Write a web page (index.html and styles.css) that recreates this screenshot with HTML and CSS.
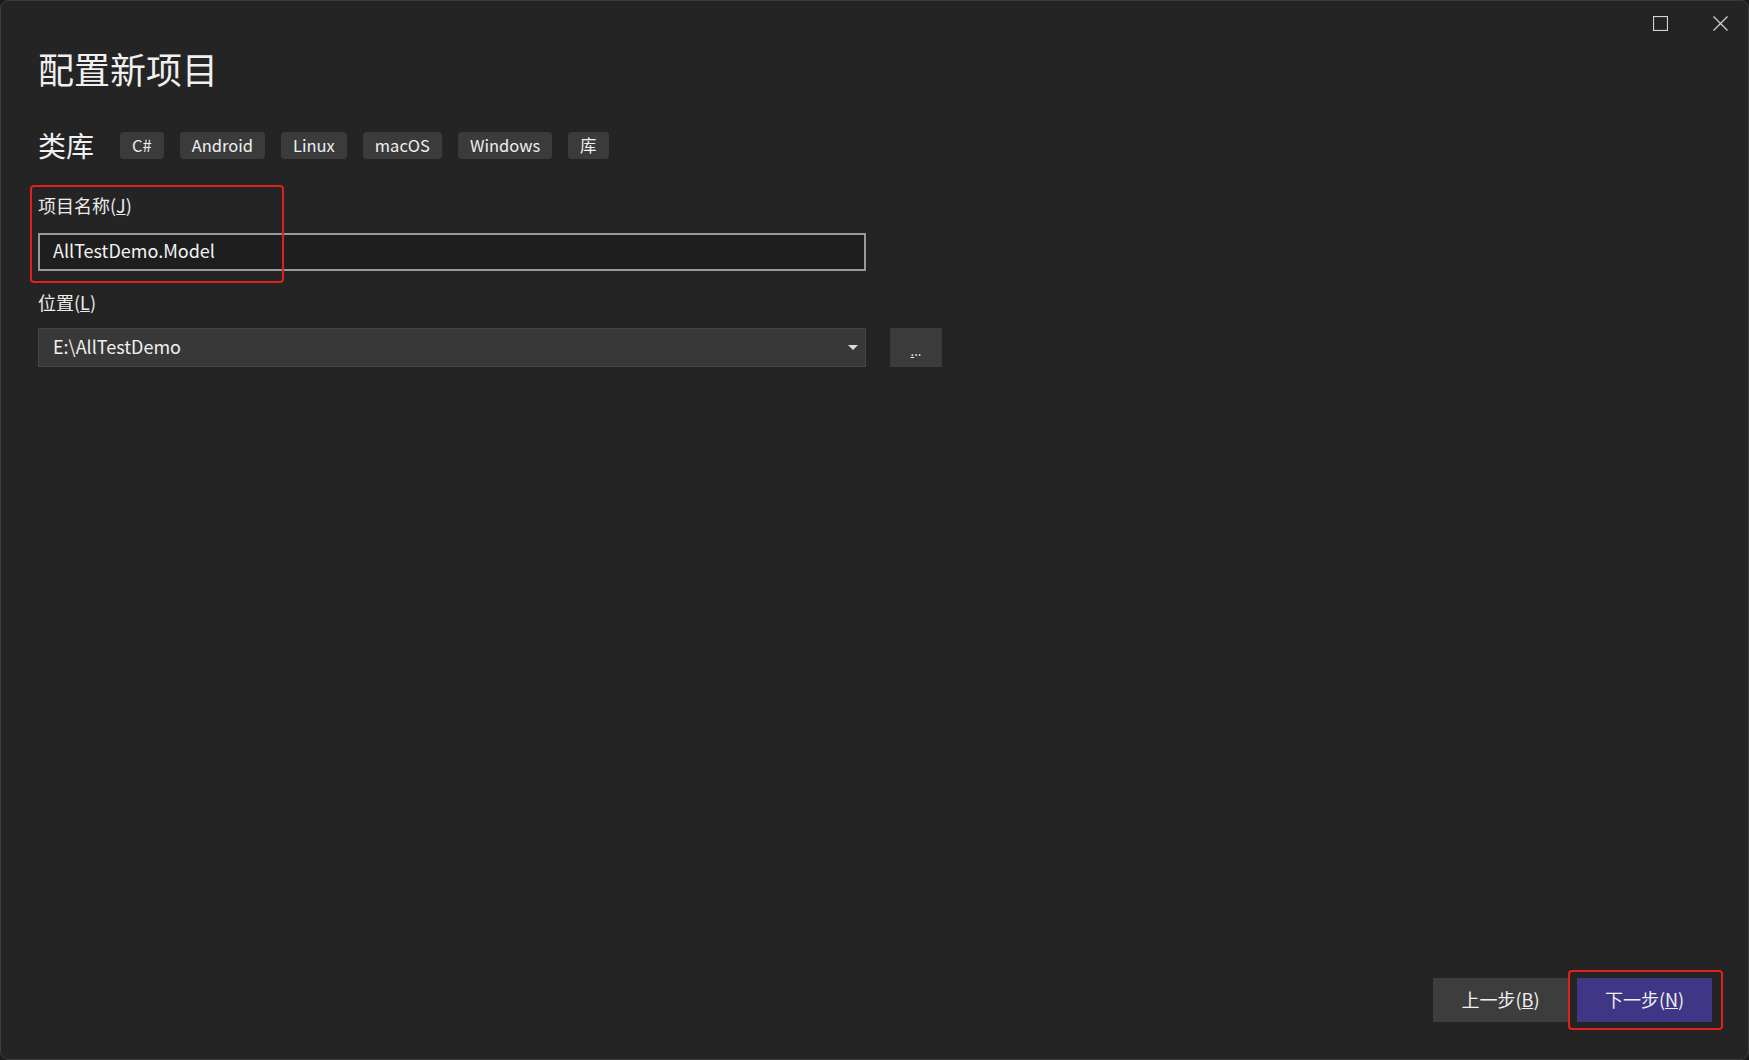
FILE: index.html
```html
<!DOCTYPE html>
<html lang="zh-CN">
<head>
<meta charset="utf-8">
<title>配置新项目</title>
<link rel="stylesheet" href="styles.css">
</head>
<body>
<div class="window">

  <div class="titlebar">
    <button class="winbtn" type="button" title="最大化">
      <svg width="15" height="15" viewBox="0 0 15 15"><rect x="0.5" y="0.5" width="14" height="14" fill="none" stroke="#d4d4d4" stroke-width="1.2"/></svg>
    </button>
    <button class="winbtn" type="button" title="关闭">
      <svg width="15" height="15" viewBox="0 0 15 15"><path d="M0.5 0.5 L14.5 14.5 M14.5 0.5 L0.5 14.5" fill="none" stroke="#d4d4d4" stroke-width="1.2"/></svg>
    </button>
  </div>

  <div class="content">
    <h1 class="title">配置新项目</h1>

    <div class="template">
      <span class="template-name">类库</span>
      <span class="tag">C#</span>
      <span class="tag">Android</span>
      <span class="tag">Linux</span>
      <span class="tag">macOS</span>
      <span class="tag">Windows</span>
      <span class="tag">库</span>
    </div>

    <div class="field field-name">
      <label class="label">项目名称(<u>J</u>)</label>
      <input class="textbox" type="text" value="AllTestDemo.Model">
      <div class="mark mark-name"></div>
    </div>

    <div class="field">
      <label class="label">位置(<u>L</u>)</label>
      <div class="row">
        <div class="combo">
          <span>E:\AllTestDemo</span>
          <span class="arrow"></span>
        </div>
        <button class="browse" type="button"><u>.</u>..</button>
      </div>
    </div>
  </div>

  <div class="footer">
    <button class="btn" type="button">上一步(<u>B</u>)</button>
    <div class="next-wrap">
      <button class="btn btn-primary" type="button">下一步(<u>N</u>)</button>
      <div class="mark mark-next"></div>
    </div>
  </div>

</div>
</body>
</html>
```

FILE: styles.css
```css
html {
  background: #1a1a1a;
}

body {
  margin: 0;
  font-family: "Noto Sans CJK SC", "Noto Sans", sans-serif;
  color: #f0f0f0;
}

.window {
  box-sizing: border-box;
  height: 1060px;
  display: flex;
  flex-direction: column;
  background: #242424;
  border: 1px solid #3d3d3d;
  border-radius: 8px;
}

.titlebar {
  display: flex;
  justify-content: flex-end;
  gap: 45px;
  padding: 15px 20px 0 0;
}

.winbtn {
  display: flex;
  padding: 0;
  border: none;
  background: none;
}

.content {
  flex: 1;
  padding-left: 37px;
}

.title {
  margin: 16px 0 0;
  font-size: 36px;
  line-height: 43px;
  font-weight: normal;
}

.template {
  display: flex;
  align-items: center;
  gap: 16px;
  margin-top: 39px;
  height: 32px;
}

.template-name {
  font-size: 28px;
  margin-right: 10px;
}

.tag {
  height: 27px;
  line-height: 26px;
  padding: 0 12px;
  font-size: 16.5px;
  background: #3b3b3b;
  border-radius: 4px;
}

.field {
  position: relative;
  width: 828px;
  margin-top: 20px;
}

.field-name {
  margin-top: 33px;
}

.label {
  display: block;
  font-size: 18px;
  line-height: 22px;
  color: #ececec;
}

.textbox {
  box-sizing: border-box;
  display: block;
  width: 828px;
  height: 38px;
  margin-top: 17px;
  padding: 0 13px 4px;
  background: #1e1e1e;
  border: 2px solid #9a9a9a;
  color: #f2f2f2;
  font-family: inherit;
  font-size: 18px;
  outline: none;
}

.row {
  display: flex;
  gap: 24px;
  margin-top: 15px;
}

.combo {
  box-sizing: border-box;
  flex: none;
  width: 828px;
  height: 39px;
  display: flex;
  align-items: center;
  justify-content: space-between;
  padding: 0 7px 3px 14px;
  background: #383838;
  border: 1px solid #444;
  font-size: 18px;
}

.arrow {
  width: 0;
  height: 0;
  margin-top: 3px;
  border-left: 5px solid transparent;
  border-right: 5px solid transparent;
  border-top: 5px solid #dcdcdc;
}

.browse {
  flex: none;
  width: 52px;
  height: 39px;
  padding: 6px 0 0;
  border: none;
  background: #3b3b3b;
  color: #f0f0f0;
  font-family: inherit;
  font-size: 13px;
}

.footer {
  display: flex;
  justify-content: flex-end;
  gap: 9px;
  padding: 0 36px 37px 0;
}

.btn {
  width: 135px;
  height: 44px;
  padding: 0 0 2px;
  border: none;
  background: #3d3d3d;
  color: #f0f0f0;
  font-family: inherit;
  font-size: 18px;
}

.btn-primary {
  background: #3f3685;
}

.next-wrap {
  position: relative;
  display: flex;
}

/* red annotation boxes drawn over the dialog */
.mark {
  position: absolute;
  border: 2px solid #e3211c;
  border-radius: 4px;
}

.mark-name {
  left: -8px;
  top: -9px;
  width: 250px;
  height: 94px;
}

.mark-next {
  left: -9px;
  top: -8px;
  right: -11px;
  bottom: -8px;
}
```
